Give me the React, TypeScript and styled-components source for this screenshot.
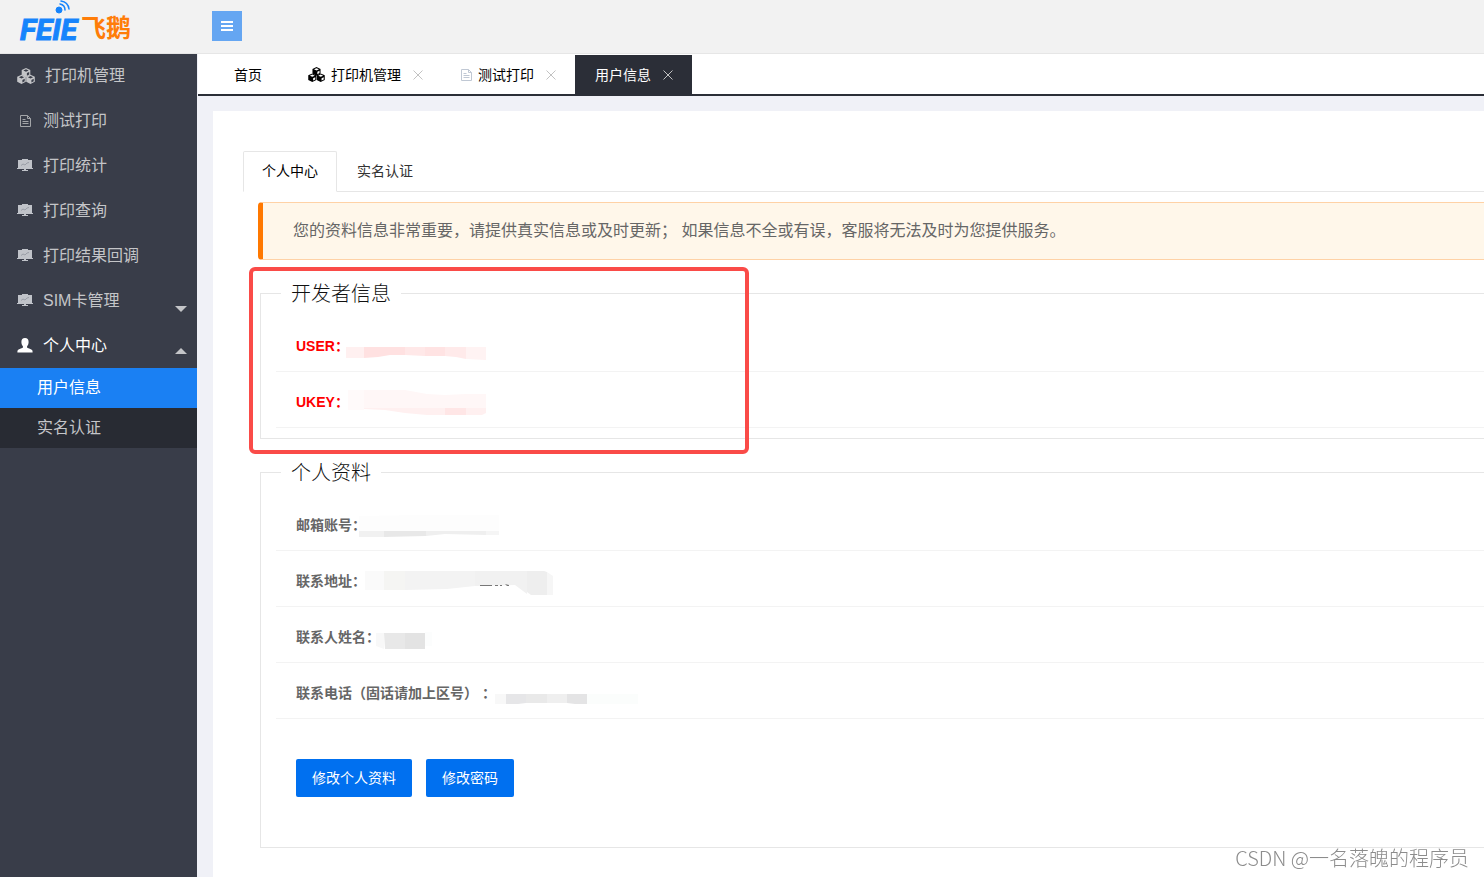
import React from "react";
import styled, { createGlobalStyle, css } from "styled-components";

const GlobalStyle = createGlobalStyle`
  *, *::before, *::after { box-sizing: border-box; }
  body {
    margin: 0;
    background: #f0f1f7;
    color: #666;
    font: 14px/24px "Liberation Sans", "Noto Sans CJK SC", sans-serif;
    overflow-x: hidden;
  }
  a { color: inherit; text-decoration: none; }
  ul { list-style: none; margin: 0; padding: 0; }
  button { font: inherit; border: 0; padding: 0; cursor: pointer; }
  svg { display: block; flex: none; }
`;

const Page = styled.div`
  display: flex;
  flex-direction: column;
  min-height: 100vh;
`;

const Header = styled.header`
  position: relative;
  z-index: 1;
  display: flex;
  align-items: flex-start;
  height: 53px;
  background: #f2f2f2;
  box-shadow: 0 1px 0 #e6e6e6;
`;

const LogoLink = styled.a`
  width: 212px;
  height: 53px;
  padding-left: 18px;
`;

const MenuToggle = styled.button`
  display: grid;
  place-items: center;
  width: 30px;
  height: 30px;
  margin-top: 11px;
  background: #65a6f2;
`;

const Body = styled.div`
  display: flex;
  flex: 1;
`;

const Sidebar = styled.nav`
  flex: none;
  width: 197px;
  background: #393d49;
  font-size: 16px;
`;

const MenuLink = styled.a<{ $active?: boolean }>`
  display: flex;
  align-items: center;
  gap: 10px;
  height: 45px;
  padding: 0 10px 0 17px;
  color: ${(p) => (p.$active ? "#fff" : "#c4c5c8")};
`;

const Caret = styled.span<{ $open?: boolean }>`
  align-self: flex-start;
  margin-left: auto;
  border: 6px solid transparent;
  ${(p) =>
    p.$open
      ? css`
          margin-top: 25px;
          border-top-width: 0;
          border-bottom-color: #c4c5c8;
        `
      : css`
          margin-top: 28px;
          border-bottom-width: 0;
          border-top-color: #c4c5c8;
        `}
`;

const SubMenu = styled.ul`
  background: #282b33;
`;

const SubLink = styled.a<{ $active?: boolean }>`
  display: block;
  padding-left: 37px;
  line-height: 40px;
  color: ${(p) => (p.$active ? "#fff" : "#c4c5c8")};
  background: ${(p) => (p.$active ? "#1a80f3" : "transparent")};
`;

const Main = styled.main`
  display: flex;
  flex: 1;
  flex-direction: column;
  min-width: 0;
  padding-left: 1px;
`;

const PageTabs = styled.div`
  display: flex;
  height: 43px;
  padding: 2px 0 0 16px;
  background: #fff;
  border-bottom: 2px solid #2b2e37;
`;

const PageTab = styled.div<{ $active?: boolean; $home?: boolean }>`
  display: flex;
  align-items: center;
  padding: 0 ${(p) => (p.$home ? 26 : 19)}px 0 20px;
  color: ${(p) => (p.$active ? "#fff" : "#000")};
  background: ${(p) => (p.$active ? "#2b2e37" : "transparent")};
`;

const TabLink = styled.a`
  display: flex;
  align-items: center;
  gap: 6px;
`;

const CloseButton = styled.button`
  margin-left: 12px;
  background: none;
  color: #c2c2c2;
`;

const Panel = styled.section`
  flex: 1;
  margin: 15px 0 0 15px;
  padding: 40px 0 24px 30px;
  background: #fff;
`;

const SectionTabs = styled.div`
  display: flex;
  height: 41px;
  border-bottom: 1px solid #e6e6e6;
`;

const SectionTab = styled.a<{ $active?: boolean }>`
  height: 41px;
  padding: 0 19px;
  border: 1px solid transparent;
  border-right-width: ${(p) => (p.$active ? 1 : 0)}px;
  line-height: 38px;
  color: #333;
  ${(p) =>
    p.$active &&
    css`
      padding: 0 18px;
      border-color: #e6e6e6 #e6e6e6 #fff;
      border-radius: 2px 2px 0 0;
      color: #000;
    `}
`;

const Notice = styled.p`
  margin: 10px 0 0 15px;
  padding: 16px 30px;
  border: 1px solid #ffd2a6;
  border-left: 5px solid #ff7800;
  border-right: 0;
  border-radius: 4px 0 0 4px;
  background: #fff7ea;
  font-size: 16px;
`;

const Highlight = styled.div`
  position: absolute;
  top: -12px;
  left: -11px;
  width: 500px;
  height: 187px;
  border: 4px solid #fa4b48;
  border-radius: 6px;
  pointer-events: none;
`;

const GroupWrap = styled.div`
  position: relative;
  margin: 19px 0 0 17px;
`;

const Group = styled.fieldset`
  min-width: 0;
  margin: 0;
  padding: 9px 0 10px 15px;
  border: 1px solid #e6e6e6;
  border-right: 0;
`;

const GroupTitle = styled.legend`
  height: 28px;
  margin-left: 5px;
  padding: 0 10px;
  color: #111;
  font-size: 20px;
  font-weight: 300;
  line-height: 30px;
`;

const Row = styled.div<{ $red?: boolean }>`
  display: flex;
  height: 56px;
  padding-left: 20px;
  border-bottom: 1px solid #f3f3f3;
  color: ${(p) => (p.$red ? "#f00" : "#666")};
  font-weight: bold;
  line-height: 60px;
  white-space: pre;
`;

const Mosaic = styled.svg`
  margin-left: -10px;
`;

const Actions = styled.div`
  display: flex;
  gap: 14px;
  padding: 40px 20px;
`;

const PrimaryButton = styled.button`
  height: 38px;
  padding: 0 16px;
  border-radius: 2px;
  background: #0070f0;
  color: #fff;
`;

const Watermark = styled.div`
  position: fixed;
  right: 15px;
  bottom: 4px;
  color: #8c8c8c;
  font: 300 20px/30px "Noto Sans CJK SC", sans-serif;
`;

const Logo = () => (
  <svg width="120" height="50" role="img" aria-label="FEIE 飞鹅">
    <g fill="#1684fc" stroke="#1684fc">
      <text x="2" y="40" fontFamily="Roboto, sans-serif" fontSize="30" fontWeight="bold" fontStyle="italic">
        FEIE
      </text>
      <circle cx="41" cy="10" r="3" />
      <path d="M42 4q5 1 5 6M43 1q7 1 8 8" fill="none" strokeWidth="1.5" strokeLinecap="round" />
    </g>
    <text x="63" y="37" fill="#ff7d08" fontFamily="Noto Sans CJK SC, sans-serif" fontSize="25" fontWeight="bold">
      飞鹅
    </text>
  </svg>
);

const cube =
  "m0-4.600 4.300 2v5L0 4.600l-4.300-2.200v-5zM0-3.300l-2.600 1.200L0-.9l2.600-1.200zM.9.500v2.600l2.300-1.200v-2.500z";

const CubesIcon = ({ size }: { size: number }) => (
  <svg width={size} height={size - 2} viewBox="0 0 18 16" fill="currentColor" fillRule="evenodd">
    <path d={cube} transform="translate(9 4.6)" />
    <path d={cube} transform="translate(4.5 11.4)" />
    <path d={cube} transform="translate(13.5 11.4)" />
  </svg>
);

const DocIcon = ({ color = "#a3a5a8" }: { color?: string }) => (
  <svg width="12" height="14" viewBox="0 0 12 14" fill="none" stroke={color}>
    <path d="M.5 1.500h7l3 3v8H.5zM7.500 1.500v3h3M2.500 5.500h3M2.500 7.500h6M2.500 9.500h6" />
  </svg>
);

const BoardIcon = () => (
  <svg width="16" height="16" viewBox="0 0 16 16">
    <path d="M1 2h4V1h6v1h4v8h1v1H9v1h2v1H5v-1h2v-1H0v-1h1z" fill="#c0c3c9" />
    <path d="M4 7.500l2-1.500 2 1 2-2 2-.5" fill="none" stroke="#9a9ea7" />
  </svg>
);

const PersonIcon = () => (
  <svg width="16" height="16" viewBox="0 0 16 16" fill="#fff">
    <path d="M8 0c2.500 0 3.600 1.600 3.600 3.900 0 1.900-.6 3.300-1.500 4.200v1.500c0 .6 4.100 1.500 5 2.500.4.600.5 1.200.5 2.400H.4c0-1.200.1-1.800.5-2.400.9-1 5-1.900 5-2.500V8.100C5 7.200 4.400 5.800 4.400 3.900 4.400 1.600 5.500 0 8 0z" />
  </svg>
);

const CloseIcon = () => (
  <svg width="10" height="10" viewBox="0 0 10 10" stroke="currentColor">
    <path d="M.5.5l9 9M9.500.5l-9 9" />
  </svg>
);

type Shape = [string, string];

const fields: Record<string, Shape[]> = {
  user: [
    ["#fff0f0", "M7 31h18v11H7z"],
    ["#ffe1e1", "M25 31h41v8l-15 0-12 2-14 1z"],
    ["#ffe8e8", "M66 31h20v9l-20-1z"],
    ["#ffe3e3", "M86 31h20v9H86z"],
    ["#ffeaea", "M106 31h21v12l-10-2-11-1z"],
    ["#fff3f3", "M127 31h20v13l-20-1z"],
  ],
  ukey: [
    ["#fffafa", "M9 18h16v20H9z"],
    ["#fff7f7", "M25 18h41l22 4 18 1 21-1h20v14H25z"],
    ["#fff0f0", "M25 36h81v7H88l-22-2-20-3-21-1z"],
    ["#ffe6e6", "M106 36h21v7h-21z"],
    ["#fff0f0", "M127 36h20v5l-4 2h-16z"],
  ],
  email: [
    ["#fdfdfd", "M3 21l60-1h80v16H3z"],
    ["#f1f1f1", "M3 36h25v6H3z"],
    ["#e8e8e8", "M28 36h42v5l-42 1z"],
    ["#efefef", "M70 36h60v4l-41-1-19 2z"],
    ["#f5f5f5", "M130 36h13v4h-13z"],
  ],
  address: [
    ["#fafafa", "M9 20h19v19H9z"],
    ["#f5f5f3", "M28 20h21v19H28z"],
    ["#f3f3f3", "M49 20h70v15l-28 3-42 1z"],
    ["#f1f1f1", "M119 20h52v23l-12-9-40 1z"],
    ["#eeeeee", "M171 20h17l3 1v23h-16l-4-3z"],
    ["#f6f6f6", "M191 21l6 4v19h-6z"],
    ["#777", "M124 34h12v1h-12zM139 34h3v1h-3zM144 34h2v1h-2zM149 33l2 2h2v-1z"],
  ],
  name: [
    ["#f8f8f8", "M6 26h8v16l-8-3z"],
    ["#e8e8e8", "M14 26h21v16H15z"],
    ["#e3e3e3", "M35 26h20v16H35z"],
    ["#fcfdfd", "M55 25h7v14h-7z"],
  ],
  phone: [
    ["#f8f8f8", "M9 31h11v10H9z"],
    ["#e6e6e8", "M20 31h20v9l-8 1H20z"],
    ["#e9e9e9", "M40 31h21v9H40z"],
    ["#efefef", "M61 31h20v9H61z"],
    ["#e4e4e5", "M81 31h20v10H89l-8-1z"],
    ["#fbfdfc", "M101 31h51v10h-51z"],
  ],
};

const Field = ({ label, value, red }: { label: string; value: string; red?: boolean }) => (
  <Row $red={red}>
    {label}
    <Mosaic width="200" height="55" aria-hidden="true">
      {fields[value].map(([fill, d], i) => (
        <path key={i} fill={fill} d={d} />
      ))}
    </Mosaic>
  </Row>
);

export default function App() {
  return (
    <Page>
      <GlobalStyle />
      <Header>
        <LogoLink href="#">
          <Logo />
        </LogoLink>
        <MenuToggle type="button" aria-label="菜单">
          <svg width="12" height="10" fill="#fff">
            <path d="M0 0h12v2H0zM0 4h12v2H0zM0 8h12v2H0z" />
          </svg>
        </MenuToggle>
      </Header>
      <Body>
        <Sidebar>
          <ul>
            <li>
              <MenuLink href="#">
                <CubesIcon size={18} />
                打印机管理
              </MenuLink>
            </li>
            <li>
              <MenuLink href="#">
                <svg width="16" height="14" viewBox="-3 0 16 14">
                  <DocIcon />
                </svg>
                测试打印
              </MenuLink>
            </li>
            {["打印统计", "打印查询", "打印结果回调"].map((name) => (
              <li key={name}>
                <MenuLink href="#">
                  <BoardIcon />
                  {name}
                </MenuLink>
              </li>
            ))}
            <li>
              <MenuLink href="#">
                <BoardIcon />
                SIM卡管理
                <Caret />
              </MenuLink>
            </li>
            <li>
              <MenuLink href="#" $active>
                <PersonIcon />
                个人中心
                <Caret $open />
              </MenuLink>
              <SubMenu>
                <li>
                  <SubLink href="#" $active>
                    用户信息
                  </SubLink>
                </li>
                <li>
                  <SubLink href="#">实名认证</SubLink>
                </li>
              </SubMenu>
            </li>
          </ul>
        </Sidebar>
        <Main>
          <PageTabs>
            <PageTab $home>
              <TabLink href="#">首页</TabLink>
            </PageTab>
            <PageTab>
              <TabLink href="#">
                <CubesIcon size={17} />
                打印机管理
              </TabLink>
              <CloseButton type="button" aria-label="关闭">
                <CloseIcon />
              </CloseButton>
            </PageTab>
            <PageTab>
              <TabLink href="#">
                <svg width="10" height="14" viewBox="1 0 10 14" overflow="visible">
                  <DocIcon color="#c0c8d4" />
                </svg>
                测试打印
              </TabLink>
              <CloseButton type="button" aria-label="关闭">
                <CloseIcon />
              </CloseButton>
            </PageTab>
            <PageTab $active>
              <TabLink href="#">用户信息</TabLink>
              <CloseButton type="button" aria-label="关闭">
                <CloseIcon />
              </CloseButton>
            </PageTab>
          </PageTabs>
          <Panel>
            <SectionTabs>
              <SectionTab href="#" $active>
                个人中心
              </SectionTab>
              <SectionTab href="#">实名认证</SectionTab>
            </SectionTabs>
            <Notice>您的资料信息非常重要，请提供真实信息或及时更新； 如果信息不全或有误，客服将无法及时为您提供服务。</Notice>
            <GroupWrap>
              <Group>
                <GroupTitle>开发者信息</GroupTitle>
                <Field label="USER：" value="user" red />
                <Field label="UKEY：" value="ukey" red />
              </Group>
              <Highlight />
            </GroupWrap>
            <GroupWrap>
              <Group>
                <GroupTitle>个人资料</GroupTitle>
                <Field label="邮箱账号：" value="email" />
                <Field label="联系地址：" value="address" />
                <Field label="联系人姓名：" value="name" />
                <Field label="联系电话（固话请加上区号） ：" value="phone" />
                <Actions>
                  <PrimaryButton type="button">修改个人资料</PrimaryButton>
                  <PrimaryButton type="button">修改密码</PrimaryButton>
                </Actions>
              </Group>
            </GroupWrap>
          </Panel>
        </Main>
      </Body>
      <Watermark>CSDN @一名落魄的程序员</Watermark>
    </Page>
  );
}
